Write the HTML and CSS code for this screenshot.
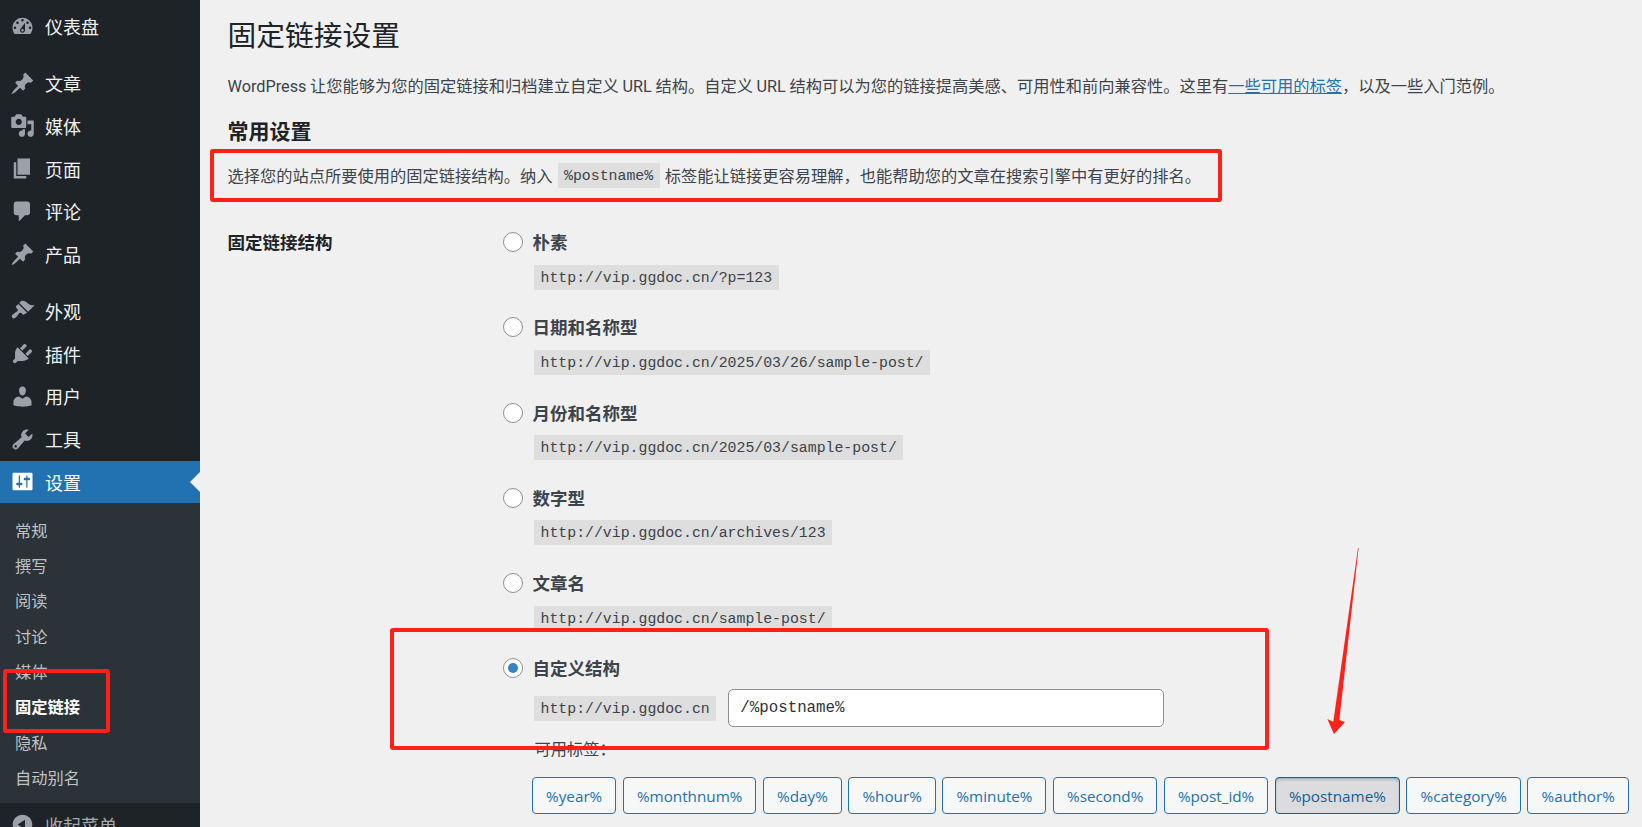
FILE: index.html
```html
<!DOCTYPE html>
<html lang="zh-CN">
<head>
<meta charset="utf-8">
<title>固定链接设置</title>
<link rel="stylesheet" href="styles.css">
</head>
<body>
<div class="page">
  <nav class="sidebar">
    <ul class="menu">
      <li class="item"><svg class="icon" viewBox="0 0 20 20"><path fill-rule="evenodd" d="M3.76 16h12.48c1.1-1.37 1.76-3.11 1.76-5 0-4.42-3.58-8-8-8s-8 3.58-8 8c0 1.89.66 3.63 1.76 5zM10 4c.55 0 1 .45 1 1s-.45 1-1 1-1-.45-1-1 .45-1 1-1zM6 6c.55 0 1 .45 1 1s-.45 1-1 1-1-.45-1-1 .45-1 1-1zm8 0c.55 0 1 .45 1 1s-.45 1-1 1-1-.45-1-1 .45-1 1-1zm-5.37 5.55L12 7v6c0 1.1-.9 2-2 2s-2-.9-2-2c0-.57.24-1.08.63-1.45zM4 10c.55 0 1 .45 1 1s-.45 1-1 1-1-.45-1-1 .45-1 1-1zm12 0c.55 0 1 .45 1 1s-.45 1-1 1-1-.45-1-1 .45-1 1-1zm-5 3c0-.55-.45-1-1-1s-1 .45-1 1 .45 1 1 1 1-.45 1-1z"/></svg>仪表盘</li>
      <li class="item sep"><svg class="icon" viewBox="0 0 20 20"><path d="M10.44 3.02l1.82-1.82 6.36 6.35-1.83 1.82c-1.05-.68-2.48-.57-3.41.36l-.75.75c-.92.93-1.04 2.35-.35 3.41l-1.83 1.82-2.41-2.41-2.8 2.79c-.42.42-3.38 2.71-3.8 2.29s1.86-3.39 2.28-3.81l2.79-2.79L4.1 9.36l1.83-1.82c1.05.69 2.48.57 3.41-.36l.75-.75c.93-.92 1.05-2.35.35-3.41z"/></svg>文章</li>
      <li class="item"><svg class="icon" viewBox="0 0 20 20"><path fill-rule="evenodd" d="M13 11V4c0-.55-.45-1-1-1h-1.67L9 1H5L3.67 3H2c-.55 0-1 .45-1 1v7c0 .55.45 1 1 1h10c.55 0 1-.45 1-1zM7 4.5c1.38 0 2.5 1.12 2.5 2.5S8.38 9.5 7 9.5 4.5 8.38 4.5 7 5.62 4.5 7 4.5zM14 6h5v10.5c0 1.38-1.12 2.5-2.5 2.5S14 17.88 14 16.5s1.12-2.5 2.5-2.5c.17 0 .34.02.5.05V9h-3V6zm-4 8.05V13h2v3.5c0 1.38-1.12 2.5-2.5 2.5S7 17.88 7 16.5 8.12 14 9.5 14c.17 0 .34.02.5.05z"/></svg>媒体</li>
      <li class="item"><svg class="icon" viewBox="0 0 20 20"><path d="M6 15V2h10v13H6zm-1 1h8v2H3V5h2v11z"/></svg>页面</li>
      <li class="item"><svg class="icon" viewBox="0 0 20 20"><path d="M5 2h9c1.1 0 2 .9 2 2v7c0 1.1-.9 2-2 2h-2l-5 5v-5H5c-1.1 0-2-.9-2-2V4c0-1.1.9-2 2-2z"/></svg>评论</li>
      <li class="item"><svg class="icon" viewBox="0 0 20 20"><path d="M10.44 3.02l1.82-1.82 6.36 6.35-1.83 1.82c-1.05-.68-2.48-.57-3.41.36l-.75.75c-.92.93-1.04 2.35-.35 3.41l-1.83 1.82-2.41-2.41-2.8 2.79c-.42.42-3.38 2.71-3.8 2.29s1.86-3.39 2.28-3.81l2.79-2.79L4.1 9.36l1.83-1.82c1.05.69 2.48.57 3.41-.36l.75-.75c.93-.92 1.05-2.35.35-3.41z"/></svg>产品</li>
      <li class="item sep"><svg class="icon" viewBox="0 0 20 20"><path d="M14.48 11.06L7.41 3.99l1.5-1.5c.5-.56 2.3-.47 3.51.32 1.21.8 1.43 1.28 2.91 2.1 1.18.64 2.45 1.26 4.45.85zm-.71.71L6.7 4.7 4.93 6.47c-.39.39-.39 1.02 0 1.41l1.06 1.06c.39.39.39 1.03 0 1.42-.6.6-1.43 1.11-2.21 1.69-.35.26-.7.53-1.01.84C1.43 13.71.96 14.99 1.84 15.87c.87.87 2.15.4 3.16-.61.3-.31.58-.66.84-1.02.57-.78 1.08-1.61 1.69-2.21.39-.39 1.02-.39 1.41 0l1.06 1.06c.39.39 1.02.39 1.41 0z"/></svg>外观</li>
      <li class="item"><svg class="icon" viewBox="0 0 20 20"><path d="M13.11 4.36L9.87 7.6 8 5.73l3.24-3.24c.35-.34 1.05-.2 1.56.32.52.51.66 1.21.31 1.55zm-8 1.77l.91-1.12 9.01 9.01-1.19.84c-.71.71-2.63 1.16-3.82 1.16H6.14L4.9 17.26c-.59.59-1.54.59-2.12 0-.59-.58-.59-1.53 0-2.12l1.24-1.24v-3.88c0-1.13.4-3.19 1.09-3.89zm7.26 3.97l3.24-3.24c.34-.35 1.04-.21 1.55.31.52.51.66 1.21.31 1.55l-3.24 3.25z"/></svg>插件</li>
      <li class="item"><svg class="icon" viewBox="0 0 20 20"><path d="M10 9.25c-2.27 0-2.73-3.44-2.73-3.44C7 4.02 7.82 2 9.97 2c2.16 0 2.98 2.02 2.71 3.81 0 0-.41 3.44-2.68 3.44zm0 2.57L12.72 10c2.39 0 4.52 2.33 4.52 4.53v2.49s-3.65 1.13-7.24 1.13c-3.65 0-7.24-1.13-7.24-1.13v-2.49c0-2.25 1.94-4.48 4.47-4.48z"/></svg>用户</li>
      <li class="item"><svg class="icon" viewBox="0 0 20 20"><path fill-rule="evenodd" d="M16.68 9.77c-1.34 1.34-3.3 1.67-4.95.99l-5.41 6.52c-.99.99-2.59.99-3.58 0s-.99-2.59 0-3.57l6.52-5.42c-.68-1.65-.35-3.61.99-4.95 1.28-1.28 3.12-1.62 4.72-1.06l-2.89 2.89 2.82 2.82 2.86-2.87c.53 1.58.18 3.39-1.08 4.65zM3.81 16.21c.4.39 1.04.39 1.43 0 .4-.4.4-1.04 0-1.43-.39-.4-1.03-.4-1.43 0-.39.39-.39 1.03 0 1.43z"/></svg>工具</li>
      <li class="item active"><svg class="icon" viewBox="0 0 20 20"><path fill-rule="evenodd" d="M18 16V4c0-.55-.45-1-1-1H3c-.55 0-1 .45-1 1v12c0 .55.45 1 1 1h14c.55 0 1-.45 1-1zM8 11h1c.55 0 1 .45 1 1s-.45 1-1 1H8v1.5c0 .28-.22.5-.5.5s-.5-.22-.5-.5V13H6c-.55 0-1-.45-1-1s.45-1 1-1h1V5.5c0-.28.22-.5.5-.5s.5.22.5.5V11zm5-2h-1c-.55 0-1-.45-1-1s.45-1 1-1h1V5.5c0-.28.22-.5.5-.5s.5.22.5.5V7h1c.55 0 1 .45 1 1s-.45 1-1 1h-1v5.5c0 .28-.22.5-.5.5s-.5-.22-.5-.5V9z"/></svg>设置</li>
    </ul>
    <ul class="submenu">
      <li>常规</li>
      <li>撰写</li>
      <li>阅读</li>
      <li>讨论</li>
      <li>媒体</li>
      <li class="current">固定链接</li>
      <li>隐私</li>
      <li>自动别名</li>
    </ul>
    <div class="item collapse"><svg class="icon" viewBox="0 0 20 20"><path fill-rule="evenodd" d="M10 2.16c4.33 0 7.84 3.51 7.84 7.84s-3.51 7.84-7.84 7.84S2.16 14.33 2.16 10 5.71 2.16 10 2.16zm2 11.72V6.12L6.18 9.97z"/></svg>收起菜单</div>
  </nav>

  <main class="main">
    <h1>固定链接设置</h1>
    <p class="intro">WordPress 让您能够为您的固定链接和归档建立自定义 URL 结构。自定义 URL 结构可以为您的链接提高美感、可用性和前向兼容性。这里有<a href="#">一些可用的标签</a>，以及一些入门范例。</p>
    <h2>常用设置</h2>
    <p class="lead">选择您的站点所要使用的固定链接结构。纳入 <code>%postname%</code> 标签能让链接更容易理解，也能帮助您的文章在搜索引擎中有更好的排名。</p>

    <div class="form">
      <div class="form-label">固定链接结构</div>
      <div class="options">
        <div class="option">
          <div class="choice"><span class="radio"></span>朴素</div>
          <code class="sample">http://vip.ggdoc.cn/?p=123</code>
        </div>
        <div class="option">
          <div class="choice"><span class="radio"></span>日期和名称型</div>
          <code class="sample">http://vip.ggdoc.cn/2025/03/26/sample-post/</code>
        </div>
        <div class="option">
          <div class="choice"><span class="radio"></span>月份和名称型</div>
          <code class="sample">http://vip.ggdoc.cn/2025/03/sample-post/</code>
        </div>
        <div class="option">
          <div class="choice"><span class="radio"></span>数字型</div>
          <code class="sample">http://vip.ggdoc.cn/archives/123</code>
        </div>
        <div class="option">
          <div class="choice"><span class="radio"></span>文章名</div>
          <code class="sample">http://vip.ggdoc.cn/sample-post/</code>
        </div>
        <div class="option">
          <div class="choice"><span class="radio checked"></span>自定义结构</div>
          <div class="custom-row">
            <code>http://vip.ggdoc.cn</code>
            <input class="custom-input" type="text" value="/%postname%">
          </div>
          <div class="tags-label">可用标签：</div>
          <div class="tags">
            <button class="tag">%year%</button>
            <button class="tag">%monthnum%</button>
            <button class="tag">%day%</button>
            <button class="tag">%hour%</button>
            <button class="tag">%minute%</button>
            <button class="tag">%second%</button>
            <button class="tag">%post_id%</button>
            <button class="tag on">%postname%</button>
            <button class="tag">%category%</button>
            <button class="tag">%author%</button>
          </div>
        </div>
      </div>
    </div>
  </main>

  <div class="mark mark-lead"></div>
  <div class="mark mark-custom"></div>
  <div class="mark mark-nav"></div>
  <svg class="arrow" viewBox="0 0 40 190"><polygon points="32,1 32.6,1 13.3,173 19,175 8,187 1.3,172 7.3,174.7" fill="#ff2118"/></svg>
</div>
</body>
</html>
```
FILE: styles.css
```css
* { box-sizing: border-box; }
html, body { margin: 0; height: 100%; overflow: hidden; }
body {
  background: #f0f0f1;
  color: #3c434a;
  font-family: Roboto, "Noto Sans CJK SC", sans-serif;
  font-size: 16.25px;
}
.page { position: relative; display: flex; width: 1642px; height: 827px; overflow: hidden; }
ul { list-style: none; margin: 0; padding: 0; }

/* sidebar */
.sidebar { flex: 0 0 200px; height: 827px; background: #1d2327; padding-top: 5px; overflow: hidden; }
.item {
  display: flex; align-items: center;
  height: 42.75px; padding-left: 10px;
  color: #f0f0f1; font-size: 18px;
  position: relative;
}
.item.sep { margin-top: 14px; }
.icon { width: 25px; height: 25px; margin-right: 10px; fill: #9ca1a7; flex: none; }
.item.active { background: #2271b1; color: #fff; }
.item.active .icon { fill: #fff; }
.item.active::after {
  content: ""; position: absolute; right: 0; top: 11px;
  border: 10.5px solid transparent; border-right-color: #f0f0f1; border-left-width: 0;
}
.submenu { background: #2c3338; padding: 10.5px 0 7px; }
.submenu li {
  height: 35.3px; line-height: 35.3px; padding-left: 15px;
  color: #bfc2c5; font-size: 16.25px;
}
.submenu .current { color: #fff; font-weight: 700; }
.collapse { color: #a7aaad; }

/* main */
.main { flex: 1; min-width: 0; padding: 16px 0 0 27.5px; }
h1 { margin: 0; font-size: 28.75px; font-weight: 400; line-height: 40px; color: #1d2327; }
.intro { margin: 19px 0 0; line-height: 24px; white-space: nowrap; word-spacing: -0.4px; }
.intro a { color: #2271b1; }
h2 { margin: 21px 0 0; font-size: 21px; font-weight: 700; line-height: 24px; color: #1d2327; }
.lead { margin: 21px 0 0; line-height: 24px; white-space: nowrap; }
code {
  display: inline-block; height: 25px; line-height: 27.5px; padding: 0 6.5px;
  background: #dedede; color: #3c434a;
  font-family: "Liberation Mono", monospace; font-size: 14.85px;
}
.lead code { margin: -2px 1px 0; vertical-align: top; }

.form { display: flex; margin-top: 42px; font-size: 17.5px; }
.form-label { flex: 0 0 275.5px; line-height: 24px; font-weight: 700; color: #1d2327; }
.options { flex: 1; min-width: 0; }
.option { margin-bottom: 26.75px; }
.choice { display: flex; align-items: flex-start; height: 24px; line-height: 24px; font-weight: 700; }
.radio {
  flex: none; width: 20px; height: 20px; margin: 1px 9.5px 0 0;
  border: 1px solid #8c8f94; border-radius: 50%; background: #fff;
  display: flex; align-items: center; justify-content: center;
}
.radio.checked::before { content: ""; width: 10px; height: 10px; border-radius: 50%; background: #3582c4; }
.sample { display: block; width: fit-content; margin: 9.5px 0 0 31px; }

.custom-row { display: flex; align-items: center; gap: 12px; margin: 8px 0 0 31px; }
.custom-input {
  width: 436px; height: 38px; padding: 0 11px;
  border: 1px solid #8c8f94; border-radius: 5px; background: #fff;
  color: #2c3338; font-family: "Liberation Mono", monospace; font-size: 15.8px;
}
.tags-label { margin: 11px 0 0 31.5px; line-height: 24px; font-size: 16.25px; }
.tags { display: flex; gap: 6.5px; margin: 15px 0 0 29px; }
.tag {
  height: 37px; padding: 0 13.1px;
  border: 1px solid #2271b1; border-radius: 4px; background: #f6f7f7;
  color: #2271b1; font-family: "Open Sans", sans-serif; font-size: 15.25px; white-space: nowrap;
}
.tag.on { background: #dcdcde; border-color: #135e96; color: #135e96; box-shadow: inset 0 2px 5px -3px #135e96; }

/* annotations drawn over the screenshot */
.mark { position: absolute; border: 4px solid #ff2118; border-radius: 3px; pointer-events: none; }
.mark-lead { left: 210px; top: 149px; width: 1012px; height: 53px; }
.mark-custom { left: 390px; top: 628px; width: 879px; height: 122px; }
.mark-nav { left: 3px; top: 669px; width: 107px; height: 64px; }
.arrow { position: absolute; left: 1326px; top: 547px; width: 40px; height: 190px; }
```
